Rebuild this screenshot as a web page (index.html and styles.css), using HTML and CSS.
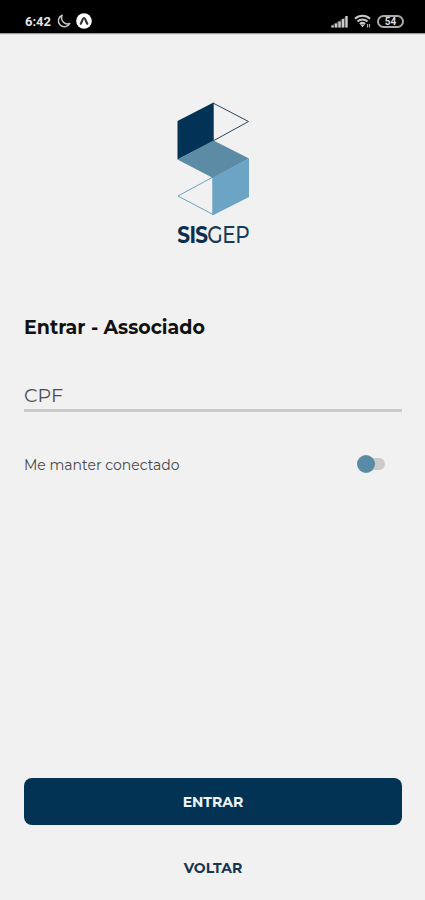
FILE: index.html
```html
<!DOCTYPE html>
<html lang="pt-BR">
<head>
    <meta charset="UTF-8">
    <title>SISGEP - Entrar</title>
    <meta name="viewport" content="width=device-width, initial-scale=1.0">
    <link rel="stylesheet" href="styles.css">
</head>
<body>
    <div class="status-bar">
        <span class="clock">6:42</span>
        <svg class="moon" width="14" height="14" viewBox="0 0 14 14">
            <path d="M5.2 1.2A6 6 0 1 0 12.8 9.4A6 6 0 0 1 5.2 1.2Z" fill="none" stroke="#c4c4c4" stroke-width="1.5" stroke-linejoin="round"/>
        </svg>
        <svg class="app-icon" width="16" height="16" viewBox="0 0 16 16">
            <circle cx="8" cy="8" r="7.8" fill="#fff"/>
            <path d="M4.7 10.8C6 9.5 6.5 5 8 5s2 4.5 3.3 5.8" fill="none" stroke="#333" stroke-width="2.2" stroke-linecap="round"/>
        </svg>
        <svg class="signal" width="17" height="13" viewBox="0 0 17 13">
            <path d="M0 12.5V10.5L16.5 1V12.5Z" fill="#444"/>
            <path d="M1.5 12.5v-2M5 12.5V8.5M8.5 12.5V6.5M12 12.5V4M15.500 12.500V1" stroke="#ccc" stroke-width="2.3"/>
        </svg>
        <svg class="wifi" width="18" height="14" viewBox="0 0 18 14">
            <g fill="none" stroke="#c8c8c8" stroke-width="2">
                <path d="M1 4.7a11 11 0 0 1 15 0"/>
                <path d="M3.5 7.5a7.3 7.3 0 0 1 10 0"/>
                <path d="M5.9 10a4 4 0 0 1 5.2 0"/>
            </g>
            <path d="M6.2 10.5l2.3 2.8 2.3-2.8z" fill="#c8c8c8"/>
            <path d="M13.5 10v3.5M15.5 10v3.5" stroke="#aaa" stroke-width="1.2"/>
        </svg>
        <span class="battery">54</span>
    </div>

    <main class="screen">
        <div class="logo">
            <svg width="76" height="116" viewBox="0 0 76 116">
                <path d="M39 2L74.5 20.5L39 40Z" fill="none" stroke="#2a4660"/>
                <path d="M39 76L4 95L39 113.5Z" fill="none" stroke="#6ea3be"/>
                <path d="M3.5 20L39.5 1.5V40L3.5 58.5Z" fill="#023356"/>
                <path d="M3.5 58.5L39.5 39.5L75 57.5L39 77Z" fill="#5b8ba5"/>
                <path d="M38.5 76.5L75 57.5V96L38.5 114.5Z" fill="#6ca4c5"/>
            </svg>
            <div class="logo-name"><b>SIS</b><span>GEP</span></div>
        </div>

        <form class="login">
            <h1>Entrar - Associado</h1>
            <input class="cpf" type="text" placeholder="CPF" aria-label="CPF">
            <label class="keep">
                <span class="keep-text">Me manter conectado</span>
                <span class="switch"></span>
            </label>
            <button class="btn-enter" type="submit">ENTRAR</button>
            <button class="btn-back" type="button">VOLTAR</button>
        </form>
    </main>
</body>
</html>
```

FILE: styles.css
```css
* {
    box-sizing: border-box;
}
body {
    margin: 0;
    height: 900px;
    display: flex;
    flex-direction: column;
    background-color: #f1f1f1;
    font-family: Montserrat, Inter, sans-serif;
    overflow: hidden;
}
.status-bar {
    display: flex;
    align-items: center;
    height: 33px;
    padding: 9px 21px 0 25px;
    background-color: #000;
    box-shadow: 0 1px 1px #999;
}
.clock {
    width: 27px;
    color: #e4e4e4;
    font: bold 13px Roboto, sans-serif;
    white-space: nowrap;
}
.moon {
    margin-left: 5px;
}
.app-icon {
    margin-left: 5px;
}
.signal {
    margin-left: auto;
}
.wifi {
    margin-left: 6px;
}
.battery {
    width: 27px;
    height: 13px;
    margin-left: 5px;
    border: 2px solid #aaa;
    border-radius: 7px;
    color: #ddd;
    font: bold 10px/9px Roboto, sans-serif;
    text-align: center;
}
.screen {
    flex: 1;
    display: flex;
    flex-direction: column;
    padding: 68px 23px 13px 24px;
}
.logo {
    display: flex;
    flex-direction: column;
    align-items: center;
    padding-right: 2px;
}
.logo-name {
    display: flex;
    height: 32px;
    margin: 2px 0 0 3px;
    color: #173b5b;
    font-size: 23.5px;
    font-weight: 500;
    line-height: 32px;
    letter-spacing: -0.5px;
    transform: scaleX(0.85);
}
.logo-name b {
    color: #0b2d4e;
    font-weight: 700;
    letter-spacing: -0.8px;
}
.login {
    flex: 1;
    display: flex;
    flex-direction: column;
}
h1 {
    margin: 65px 0 0;
    color: #111;
    font-size: 19px;
    line-height: 24px;
    font-weight: 700;
}
.cpf {
    width: 100%;
    height: 32px;
    margin-top: 40px;
    padding: 2px 0 0;
    border: 0;
    border-bottom: 3px solid #cbcbcb;
    background: none;
    font-family: inherit;
    font-size: 19px;
    outline: none;
}
.cpf::placeholder {
    color: #4c4c4c;
    opacity: 1;
}
.keep {
    display: flex;
    align-items: center;
    justify-content: space-between;
    height: 24px;
    margin-top: 40px;
    padding-right: 17px;
}
.keep-text {
    padding-top: 1px;
    color: #484848;
    font-size: 14px;
}
.switch {
    display: flex;
    align-items: center;
    width: 25px;
    height: 12px;
    border-radius: 6px;
    background-color: #cbcbcb;
}
.switch::before {
    content: "";
    flex: none;
    width: 18px;
    height: 18px;
    margin-left: -3px;
    border-radius: 50%;
    background-color: #5a8ba6;
}
button {
    border: none;
    font-family: inherit;
    font-size: 14px;
    font-weight: 700;
}
.btn-enter {
    height: 47px;
    margin-top: auto;
    border-radius: 8px;
    background-color: #023355;
    color: #eef4f8;
}
.btn-back {
    height: 38px;
    margin-top: 24px;
    background: none;
    color: #183551;
}
```
